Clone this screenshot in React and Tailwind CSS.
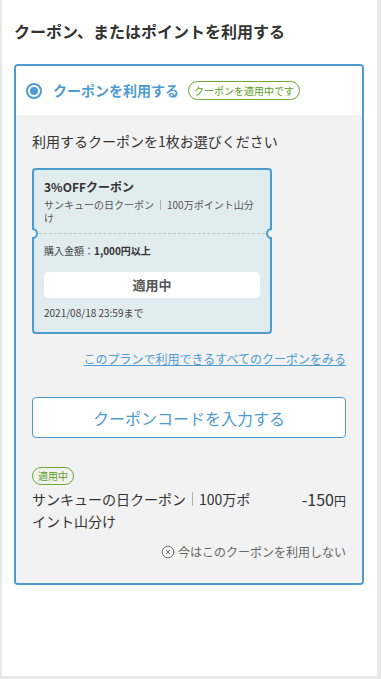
import { CircleX } from "lucide-react";

const font = {
  fontFamily: '"Noto Sans CJK JP", "Noto Sans", sans-serif',
};

const Badge = ({ children, className = "" }) => (
  <span
    className={`flex items-center rounded-full border border-[#6ea935] text-[#5e9c26] text-[10px] leading-none ${className}`}
  >
    {children}
  </span>
);

const Bar = ({ h }) => (
  <span className={`mx-[6px] inline-block w-px bg-[#b0b0b0] align-[-1px] ${h}`} />
);

const CouponCard = () => (
  <div className="relative mt-[17px] w-[240px] rounded-[4px] border-2 border-[#4d9ccf] bg-[#e1ecee] text-[#333]">
    <div className="px-[10px] pt-[8px] pb-[9px]">
      <p className="text-[12px] leading-[18px] font-bold">3%OFFクーポン</p>
      <p className="mt-[2px] pr-[4px] text-[10px] leading-[13px] text-[#555]">
        サンキューの日クーポン<Bar h="h-[10px]" />100万ポイント山分け
      </p>
    </div>
    <div className="relative border-t border-dashed border-[#b9c5c8]">
      <span className="absolute -left-[2px] -top-[6px] h-[11px] w-[6px] rounded-r-full border-2 border-l-0 border-[#4d9ccf] bg-[#f2f2f2]" />
      <span className="absolute -right-[2px] -top-[6px] h-[11px] w-[6px] rounded-l-full border-2 border-r-0 border-[#4d9ccf] bg-[#f2f2f2]" />
    </div>
    <div className="px-[10px] pt-[9px] pb-[12px]">
      <p className="text-[10px] leading-[16px] text-[#444]">
        購入金額：<span className="font-bold text-[#333]">1,000円以上</span>
      </p>
      <div className="mt-[13px] flex h-[26px] items-center justify-center rounded-[4px] bg-white text-[13px] font-bold text-[#555]">
        適用中
      </div>
      <p className="mt-[8px] text-[10px] leading-[14px] text-[#444]">2021/08/18 23:59まで</p>
    </div>
  </div>
);

export default function App() {
  return (
    <div className="min-h-[679px] bg-[#e9e9e9]" style={font}>
      <div className="ml-[2px] mr-[4px] h-[676px] bg-white pl-[12px] pr-[13px] pt-[19px]">
        <h1 className="text-[16px] leading-[24px] font-bold text-[#333]">
          クーポン、またはポイントを利用する
        </h1>

        <div className="mt-[21px] overflow-hidden rounded-[4px] border-2 border-[#4d9ccf]">
          <div className="flex h-[49px] items-center bg-white pl-[10px]">
            <span className="flex h-[16px] w-[16px] items-center justify-center rounded-full border-2 border-[#4d9ccf]">
              <span className="h-[8px] w-[8px] rounded-full bg-[#4d9ccf]" />
            </span>
            <span className="ml-[11px] text-[14px] font-bold text-[#4d9ccf]">クーポンを利用する</span>
            <Badge className="ml-[9px] h-[19px] px-[5px]">クーポンを適用中です</Badge>
          </div>

          <div className="bg-[#f2f2f2] px-[16px] pt-[16px] pb-[22px]">
            <p className="text-[14px] leading-[20px] text-[#333]">
              利用するクーポンを1枚お選びください
            </p>

            <CouponCard />

            <div className="mt-[16px] text-right text-[12px] leading-[18px]">
              <a className="text-[#4d9ccf] underline">
                このプランで利用できるすべてのクーポンをみる
              </a>
            </div>

            <button className="mt-[29px] flex h-[41px] w-full items-center justify-center rounded-[4px] border border-[#4d9ccf] bg-white text-[16px] text-[#4d9ccf]">
              クーポンコードを入力する
            </button>

            <div className="mt-[29px]">
              <div className="flex">
                <Badge className="h-[18px] px-[5px]">適用中</Badge>
              </div>
              <div className="mt-[3px] flex items-start justify-between">
                <p className="w-[225px] text-[14px] leading-[22px] text-[#333]">
                  サンキューの日クーポン<Bar h="h-[14px]" />100万ポイント山分け
                </p>
                <p className="text-[16px] leading-[22px] text-[#333]">
                  -150<span className="text-[12px]">円</span>
                </p>
              </div>
              <div className="mt-[11px] flex items-center justify-end gap-[3px] text-[12px] leading-[18px] text-[#666]">
                <CircleX size={14} strokeWidth={1.6} />
                <span>今はこのクーポンを利用しない</span>
              </div>
            </div>
          </div>
        </div>
      </div>
    </div>
  );
}
